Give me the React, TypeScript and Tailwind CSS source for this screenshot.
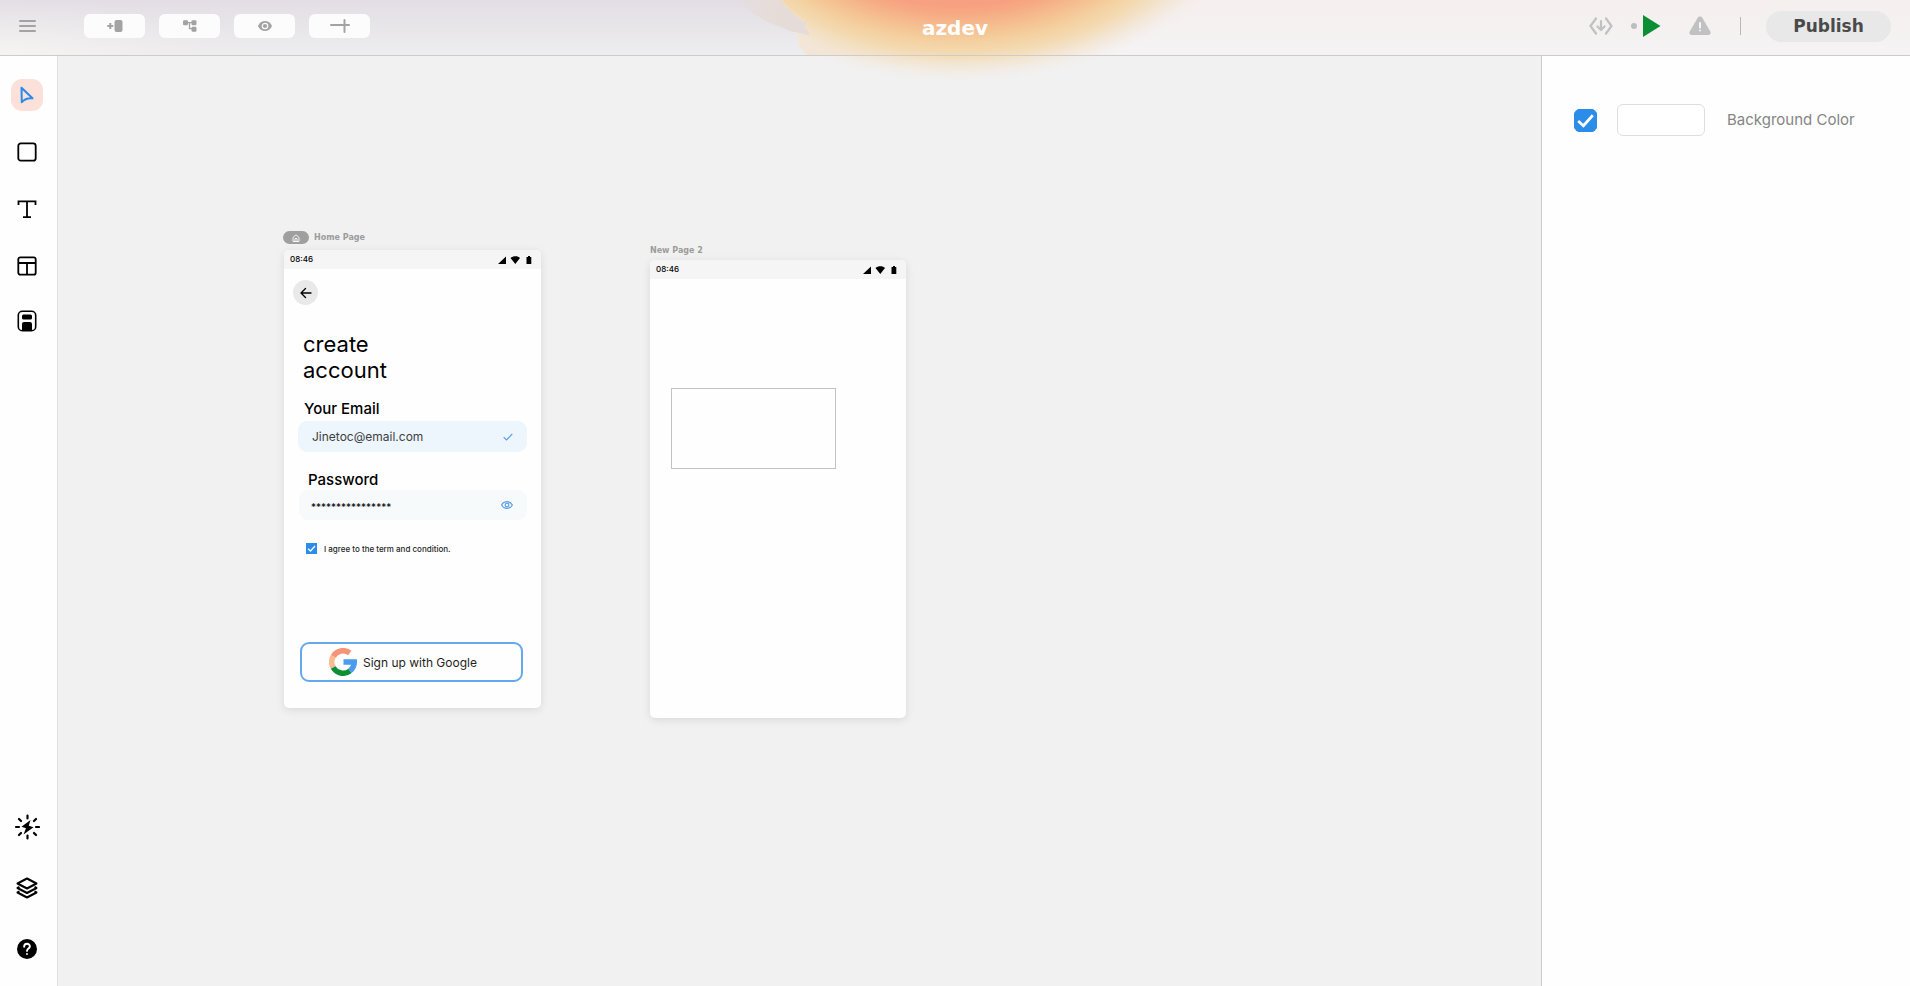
import type { ReactNode } from "react";

const SANS = "font-['Inter','Liberation_Sans',sans-serif]";
const WIDE = "font-['DejaVu_Sans',sans-serif]";

function HeaderWash() {
  return (
    <svg
      aria-hidden="true"
      className="pointer-events-none absolute top-0 left-1/2 -translate-x-1/2"
      width="1910"
      height="100"
      viewBox="0 0 1910 100"
    >
      <defs>
        <radialGradient id="sun" gradientUnits="userSpaceOnUse" cx="0" cy="0" r="184" gradientTransform="translate(958 -100) scale(1.55 1)">
          <stop offset="0.58" stopColor="#f8a180" />
          <stop offset="0.62" stopColor="#f6aa84" />
          <stop offset="0.71" stopColor="#f5c292" />
          <stop offset="0.78" stopColor="#f4d2a2" />
          <stop offset="0.84" stopColor="#f3dbb4" />
          <stop offset="0.91" stopColor="#f3e3cc" stopOpacity="0.6" />
          <stop offset="1" stopColor="#f1efec" stopOpacity="0" />
        </radialGradient>
        <radialGradient id="halo" gradientUnits="userSpaceOnUse" cx="0" cy="0" r="176" gradientTransform="translate(958 -100) scale(1.75 1)">
          <stop offset="0.5" stopColor="#f3d7a4" />
          <stop offset="0.8" stopColor="#f3dfbe" />
          <stop offset="1" stopColor="#f4ebe4" stopOpacity="0" />
        </radialGradient>
        <linearGradient id="left" x1="0" y1="0" x2="0" y2="1">
          <stop offset="0" stopColor="#e3dee5" />
          <stop offset="1" stopColor="#ededee" />
        </linearGradient>
        <linearGradient id="right" x1="0" y1="0" x2="0" y2="1">
          <stop offset="0" stopColor="#f5efee" />
          <stop offset="1" stopColor="#f5f3f4" />
        </linearGradient>
        <linearGradient id="cream" x1="0" y1="0" x2="1" y2="0">
          <stop offset="0" stopColor="#f3e5d8" />
          <stop offset="0.4" stopColor="#f3e1c8" />
          <stop offset="1" stopColor="#f4e9df" stopOpacity="0" />
        </linearGradient>
        <linearGradient id="shade" x1="0" y1="0" x2="1" y2="0">
          <stop offset="0" stopColor="#e6dcd8" stopOpacity="0" />
          <stop offset="0.5" stopColor="#e6dcd8" />
          <stop offset="1" stopColor="#e4dcd9" />
        </linearGradient>
        <radialGradient id="corner" gradientUnits="userSpaceOnUse" cx="0" cy="0" r="100" gradientTransform="translate(0 60) scale(2.6 0.6)">
          <stop offset="0" stopColor="#f7f5f4" />
          <stop offset="1" stopColor="#f0ebea" stopOpacity="0" />
        </radialGradient>
        <clipPath id="bar">
          <rect width="1910" height="55" />
        </clipPath>
        <clipPath id="burst">
          <path d="M781 0L788 8L794 14L800 18L804 22H808L805 27L808 30L810 35H803L795 32L799 37L796 40L800 43L798 47L803 50L806 55V100H1910V0Z" />
        </clipPath>
      </defs>
      <g clipPath="url(#bar)">
        <rect width="900" height="55" fill="url(#left)" />
        <rect width="300" height="55" fill="url(#corner)" />
        <path d="M730 0H800L812 36L790 31L768 22Z" fill="url(#shade)" />
        <g clipPath="url(#burst)">
          <rect x="780" width="1130" height="55" fill="url(#right)" />
          <rect x="780" width="340" height="55" fill="url(#cream)" />
          <rect x="600" width="760" height="55" fill="url(#halo)" />
        </g>
      </g>
      <g clipPath="url(#burst)">
        <rect x="600" width="700" height="100" fill="url(#sun)" />
      </g>
    </svg>
  );
}

function TopButton({ label, children }: { label: string; children: ReactNode }) {
  return (
    <button type="button" aria-label={label} className="flex h-6 w-[61px] items-center justify-center rounded-md bg-[#fcfcfc] text-[#a3a3a3]">
      {children}
    </button>
  );
}

function Header() {
  return (
    <header className="relative z-10 h-14 shrink-0">
      <HeaderWash />
      <div className="relative grid h-full grid-cols-[1fr_auto_1fr] items-center border-b border-[#cdcccc] pb-[3px]">
        <div className="flex items-center gap-[14px] pl-[18px]">
          <button type="button" aria-label="Menu" className="mr-[34px] text-[#a3a3a3]">
            <svg width="18" height="14" viewBox="0 0 18 14" fill="none" stroke="currentColor" strokeWidth="2" strokeLinecap="round">
              <path d="M2 2H17M2 7H17M2 12H17" />
            </svg>
          </button>
          <TopButton label="Add component">
            <svg width="16" height="14" viewBox="0 0 16 14" fill="currentColor">
              <path d="M2.300 4H4.300V6H6.300V8H4.300V10H2.300V8H0.300V6H2.300Z" />
              <rect x="7.500" y="1" width="8" height="12" rx="2" />
            </svg>
          </TopButton>
          <TopButton label="Page flow">
            <svg width="16" height="14" viewBox="0 0 16 14" fill="currentColor">
              <rect x="1" y="1.300" width="5" height="5" rx="1.200" />
              <rect x="9.500" y="1.300" width="5" height="5" rx="1.200" />
              <rect x="9.500" y="7.800" width="5" height="5" rx="1.200" />
              <path d="M5 3.700H10M7.500 3.700V9.700H10" fill="none" stroke="currentColor" strokeWidth="1.300" />
            </svg>
          </TopButton>
          <TopButton label="Preview">
            <svg width="16" height="12" viewBox="0 0 16 12">
              <path d="M1 6C2.500 2.800 5 1 8 1S13.500 2.800 15 6C13.500 9.200 11 11 8 11S2.500 9.200 1 6Z" fill="currentColor" />
              <circle cx="8" cy="6" r="2.700" fill="currentColor" stroke="#fcfcfc" strokeWidth="1.200" />
            </svg>
          </TopButton>
          <TopButton label="Align">
            <svg width="22" height="14" viewBox="0 0 22 14" fill="none" stroke="currentColor" strokeWidth="2" strokeLinecap="round">
              <path d="M2 6H20M15.500 1V13" />
            </svg>
          </TopButton>
        </div>
        <span className={`pt-[3px] text-xl font-bold text-white ${WIDE}`}>azdev</span>
        <div className="flex items-center justify-end pr-[19px] text-[#c0c1c2]">
          <button type="button" aria-label="Export code">
            <svg width="24" height="18" viewBox="0 0 24 18" fill="none" stroke="currentColor" strokeWidth="2.200" strokeLinecap="round" strokeLinejoin="round">
              <path d="M7 1.500L1.500 9L7 16.500M17 1.500L22.500 9L17 16.500M12 4V12.500M8.500 9.500L12 13L15.500 9.500" />
            </svg>
          </button>
          <span className="ml-[18px] size-[6px] rounded-full bg-[#bdbebf]" />
          <button type="button" aria-label="Run" className="ml-[6px]">
            <svg width="18" height="22" viewBox="0 0 18 22">
              <path d="M0 0L17.500 11L0 22Z" fill="#0b8f35" />
            </svg>
          </button>
          <button type="button" aria-label="Warnings" className="ml-7">
            <svg width="22" height="20" viewBox="0 0 22 20">
              <path d="M8.700 1.800C9.700 0.200 12.300 0.200 13.300 1.800L21.300 15.500C22.200 17.200 21.200 19 19.300 19H2.700C0.800 19 -0.200 17.200 0.700 15.500Z" fill="currentColor" />
              <path d="M11 7V11.500M11 14.500V14.600" stroke="#f7f5f5" strokeWidth="2" strokeLinecap="round" />
            </svg>
          </button>
          <span className="ml-[29px] h-[18px] w-px bg-[#b8b8b8]" />
          <button type="button" className={`ml-[25px] flex h-[31px] w-[125px] items-center justify-center rounded-full bg-[#e8e8e8] pt-px text-[17px] font-bold text-[#4a4a4a] ${WIDE}`}>
            Publish
          </button>
        </div>
      </div>
    </header>
  );
}

function Tool({ label, active = false, children }: { label: string; active?: boolean; children: ReactNode }) {
  return (
    <button
      type="button"
      aria-label={label}
      className={active ? "flex size-8 items-center justify-center rounded-[11px] bg-[#fbe1da] text-[#2b8ae8]" : "flex size-8 items-center justify-center text-black"}
    >
      {children}
    </button>
  );
}

function Sidebar() {
  return (
    <nav aria-label="Tools" className="flex w-[58px] shrink-0 flex-col justify-between border-r border-[#dfdfdf] bg-[#fefefe] pt-[23px] pb-[21px] pl-[11px]">
      <div className="flex flex-col gap-[25px]">
        <Tool label="Select" active>
          <svg width="16" height="18" viewBox="0 0 16 18" fill="none" stroke="currentColor" strokeWidth="2" strokeLinejoin="round">
            <path d="M2.500 1.800L13.500 12.300C10 11.800 6.500 12 2.800 16.200Z" />
          </svg>
        </Tool>
        <Tool label="Frame">
          <svg width="20" height="20" viewBox="0 0 20 20" fill="none" stroke="currentColor" strokeWidth="1.800">
            <rect x="1.300" y="1.300" width="17.400" height="17.400" rx="2.500" />
          </svg>
        </Tool>
        <Tool label="Text">
          <svg width="20" height="20" viewBox="0 0 20 20" fill="none" stroke="currentColor" strokeWidth="1.800">
            <path d="M1.500 6V2.300H18.500V6M10 2.300V18M6 18.200H14" />
          </svg>
        </Tool>
        <Tool label="Layout">
          <svg width="20" height="20" viewBox="0 0 20 20" fill="none" stroke="currentColor" strokeWidth="1.800">
            <rect x="1.300" y="1.300" width="17.400" height="17.400" rx="2" />
            <path d="M1.300 7H18.700M10 7V18.700" />
          </svg>
        </Tool>
        <Tool label="Component">
          <svg width="20" height="26" viewBox="0 0 20 26" fill="currentColor">
            <rect x="1.300" y="1.300" width="17.400" height="19.400" rx="4" fill="none" stroke="currentColor" strokeWidth="1.600" />
            <rect x="5" y="4.500" width="10" height="5" rx="1.500" />
            <path d="M5 14Q5 12 7 12H13Q15 12 15 14V20.500H5Z" />
          </svg>
        </Tool>
      </div>
      <div className="flex flex-col gap-[29px]">
        <Tool label="Actions">
          <svg width="26" height="26" viewBox="0 0 26 26" fill="none" stroke="currentColor" strokeWidth="2.200" strokeLinecap="round">
            <path d="M13.500 1.500V4.500M13.500 21.500V24.500M2 13H5M22 13H25M5 5L7 7M20 19L22 21M22 5L20 7M7 19L5 21" />
            <path d="M16.500 6L7.500 12.700L12 14.300L9.500 20.500L19.500 13.200L14.800 11.700Z" fill="currentColor" stroke="none" />
          </svg>
        </Tool>
        <Tool label="Layers">
          <svg width="22" height="22" viewBox="0 0 22 22" fill="none" stroke="currentColor" strokeWidth="2" strokeLinejoin="round">
            <path d="M11 1.500L20.500 6.500L11 11.500L1.500 6.500ZM3.500 10L1.500 11L11 16L20.500 11L18.500 10M3.500 14.500L1.500 15.500L11 20.500L20.500 15.500L18.500 14.500" />
          </svg>
        </Tool>
        <Tool label="Help">
          <svg width="20" height="20" viewBox="0 0 21 21" fill="none">
            <circle cx="10.500" cy="10.500" r="10.500" fill="currentColor" />
            <path d="M7.500 8.200C7.500 4 13.600 4.100 13.500 7.900C13.500 10 10.500 10.200 10.500 12.500M10.500 15.700V15.800" stroke="white" strokeWidth="2" strokeLinecap="round" />
          </svg>
        </Tool>
      </div>
    </nav>
  );
}

function StatusBar() {
  return (
    <div className="flex h-[19px] items-center justify-between rounded-t-[5px] bg-[#f5f5f5] pr-[9px] pl-[6px] text-black">
      <span className="pb-[2px] text-[8px] leading-4 font-medium">08:46</span>
      <svg width="34" height="8" viewBox="0 0 34 8" fill="currentColor" aria-hidden="true">
        <path d="M0 8L8 0.500V8ZM12.500 2C15 -0.200 20 -0.200 22 2L17.300 8ZM28.500 1H30V0H32V1H33.300V8H28.500Z" />
      </svg>
    </div>
  );
}

function TickBox({ id, box }: { id: string; box: string }) {
  return (
    <span className={`relative block shrink-0 overflow-hidden ${box}`}>
      <input
        id={id}
        type="checkbox"
        defaultChecked
        className="peer block size-full appearance-none border border-[#2b8ce9] bg-white checked:bg-[#2b8ce9]"
      />
      <svg
        aria-hidden="true"
        className="pointer-events-none absolute inset-0 hidden size-full peer-checked:block"
        viewBox="0 0 22 22"
        fill="none"
        stroke="white"
        strokeWidth="2.600"
      >
        <path d="M4 11.500L9 16L18 6" />
      </svg>
    </span>
  );
}

function GoogleMark() {
  return (
    <svg width="28" height="28" viewBox="0 0 28 28" fill="none" strokeWidth="5.500" aria-hidden="true">
      <path d="M20.800 5A11.250 11.250 0 0 0 4.200 8.500" stroke="#f59476" />
      <path d="M4.250 8.400A11.250 11.250 0 0 0 4.250 19.600" stroke="#fabb92" />
      <path d="M4.200 19.500A11.250 11.250 0 0 0 21 22.800" stroke="#0b8f35" />
      <path d="M20.900 22.900A11.250 11.250 0 0 0 25.250 14H14.500" stroke="#4b9bee" />
    </svg>
  );
}

function HomePage() {
  return (
    <section className="absolute top-[175px] left-[225px] w-[258px]">
      <div className="flex h-[13px] items-center gap-[5px]">
        <span className="flex h-[13px] w-[26px] items-center justify-center rounded-full bg-[#9f9f9f]">
          <svg width="8" height="8" viewBox="0 0 8 8" fill="none" stroke="white" strokeWidth="0.900" aria-hidden="true">
            <path d="M1 7.500V3.500L4 0.800L7 3.500V7.500ZM3 7.500V4.500H5V7.500" />
          </svg>
        </span>
        <h2 className={`text-[8px] leading-none font-bold text-[#9c9c9c] ${WIDE}`}>Home Page</h2>
      </div>
      <div className="mt-[6px] ml-px flex min-h-[458px] flex-col rounded-[5px] bg-[#fefefe] shadow-[0_2px_8px_rgba(0,0,0,0.1)]">
        <StatusBar />
        <button type="button" aria-label="Back" className="mt-[11px] ml-[9px] flex size-[25px] items-center justify-center rounded-full bg-[#e9e9ea]">
          <svg width="12" height="12" viewBox="0 0 12 12" fill="none" stroke="black" strokeWidth="1.400" strokeLinecap="round" strokeLinejoin="round">
            <path d="M11 6H1.200M5.500 1.500L1 6L5.500 10.500" />
          </svg>
        </button>
        <h3 className="mt-[26px] ml-[19px] w-[110px] text-[22px] leading-[26px] text-black">create account</h3>
        <form className="flex flex-col">
          <label htmlFor="email" className="mt-4 ml-5 text-[15px] leading-5 font-medium text-black">Your Email</label>
          <div className="mt-[2px] mr-[14px] ml-[14px] flex h-[31px] items-center rounded-[9px] bg-[#edf5fd] pr-[14px] pl-[14px]">
            <input id="email" type="email" defaultValue="Jinetoc@email.com" className="w-0 grow bg-transparent text-[12px] text-[#3f3f42] outline-none" />
            <svg width="10" height="8" viewBox="0 0 10 8" fill="none" stroke="#5b9fe6" strokeWidth="1.200" aria-hidden="true">
              <path d="M0.700 4.200L3.500 7L9.300 0.800" />
            </svg>
          </div>
          <label htmlFor="password" className="mt-[18px] ml-6 text-[15px] leading-5 font-medium text-black">Password</label>
          <div className="mr-[14px] ml-[15px] flex h-[30px] items-center rounded-[9px] bg-[#f6fafb] pr-[14px] pl-3">
            <input id="password" type="text" defaultValue="****************" className="w-0 grow bg-transparent pt-1 text-[10px] text-black outline-none" />
            <svg width="12" height="8" viewBox="0 0 12 8" fill="none" stroke="#5b9fe6" strokeWidth="1.200" aria-hidden="true">
              <path d="M0.600 4C3 -0.400 9 -0.400 11.400 4C9 8.400 3 8.400 0.600 4Z" />
              <circle cx="6" cy="4" r="1.800" />
            </svg>
          </div>
          <div className="mt-[23px] ml-[22px] flex h-[11px] items-center gap-[7px]">
            <TickBox id="terms" box="size-[11px]" />
            <label htmlFor="terms" className="text-[8px] leading-none font-medium whitespace-nowrap text-[#1f1f1f]">I agree to the term and condition.</label>
          </div>
          <button type="button" className="mt-[88px] ml-4 flex h-10 w-[223px] items-center gap-[6px] rounded-[9px] border-2 border-[#64a9ed] pl-[27px] text-[12px] text-[#1f1f22]">
            <GoogleMark />
            <span className="pt-px">Sign up with Google</span>
          </button>
        </form>
      </div>
    </section>
  );
}

function NewPage() {
  return (
    <section className="absolute top-[189px] left-[592px] w-[256px]">
      <h2 className={`h-3 text-[8px] leading-3 font-bold text-[#9c9c9c] ${WIDE}`}>New Page 2</h2>
      <div className="mt-[3px] min-h-[458px] rounded-[5px] bg-[#fefefe] shadow-[0_2px_8px_rgba(0,0,0,0.1)]">
        <StatusBar />
        <div className="mt-[109px] ml-[21px] h-[81px] w-[165px] border border-[#c2c2c2]" />
      </div>
    </section>
  );
}

export default function App() {
  return (
    <div className={`flex h-screen flex-col overflow-hidden bg-[#f1f1f1] ${SANS}`}>
      <Header />
      <div className="flex min-h-0 grow">
        <Sidebar />
        <main className="relative grow bg-[#f1f1f1]">
          <HomePage />
          <NewPage />
        </main>
        <aside className="w-[369px] shrink-0 border-l border-[#cccccc] bg-[#fefefe] pt-12 pl-8">
          <div className="flex items-center">
            <TickBox id="fill" box="size-[23px] rounded-[6px]" />
            <input type="text" aria-label="Color value" className="ml-5 h-8 w-[88px] rounded-md border border-[#dedede] bg-white" />
            <label htmlFor="fill" className="ml-[22px] text-[15px] text-[#858585]">Background Color</label>
          </div>
        </aside>
      </div>
    </div>
  );
}
